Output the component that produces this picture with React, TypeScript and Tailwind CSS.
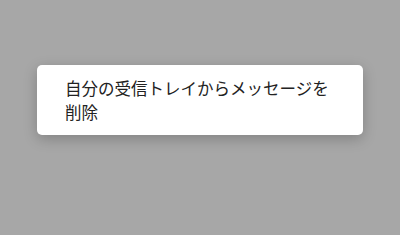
import React from 'react';

const App: React.FC = () => {
  return (
    <div className="w-[400px] h-[235px] bg-[#a7a7a7] flex justify-center pt-[65px]">
      <div
        className="w-[326px] h-[70px] bg-white rounded-[5px] shadow-[0_4px_14px_rgba(0,0,0,0.22)] pl-[28px] pr-[26px] pt-[11px]"
        style={{ fontFamily: '"Noto Sans CJK JP", "Noto Sans", sans-serif' }}
      >
        <p className="text-[16.5px] leading-[24px] text-[#222222]">
          自分の受信トレイからメッセージを削除
        </p>
      </div>
    </div>
  );
};

export default App;
